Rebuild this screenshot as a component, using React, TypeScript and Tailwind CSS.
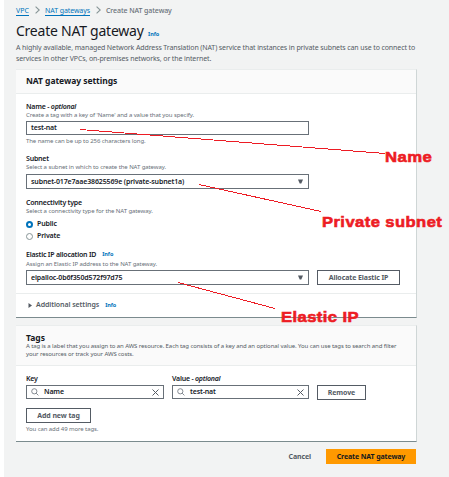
import React from "react";

function Search() {
  return (
    <svg className="mr-[5px] h-2 w-2 shrink-0" viewBox="0 0 8 8" fill="none" stroke="#687078" strokeWidth="0.8">
      <circle cx="3.3" cy="3.3" r="2.6" />
      <path d="M5.2 5.2L7.4 7.4" />
    </svg>
  );
}

function Close() {
  return (
    <svg className="ml-auto h-[7px] w-[7px] shrink-0" viewBox="0 0 7 7" stroke="#545b64" strokeWidth="1">
      <path d="M0.5 0.5L6.5 6.5M6.5 0.5L0.5 6.5" />
    </svg>
  );
}

function Caret() {
  return (
    <svg className="ml-auto h-[5px] w-[5px] shrink-0" viewBox="0 0 5 5" fill="#545b64">
      <path d="M0 0.5H5L3.3 4.5H1.7Z" />
    </svg>
  );
}

function Chevron() {
  return (
    <svg className="h-[8px] w-[5px]" viewBox="0 0 5 8" fill="none" stroke="#879596" strokeWidth="1.1">
      <path d="M0.6 0.6L4.2 4L0.6 7.4" />
    </svg>
  );
}

function Label({ children }: { children: React.ReactNode }) {
  return <div className="h-[10px] text-[7px] leading-[11px] font-semibold tracking-[-0.22px] text-[#16191f]">{children}</div>;
}

function Hint({ children }: { children: React.ReactNode }) {
  return <div className="h-[9px] text-[6px] leading-[9px] tracking-[-0.085px] text-[#687078]">{children}</div>;
}

const box = "flex items-center border border-[#687078] bg-white text-[7px] font-semibold tracking-[-0.14px] text-[#16191f]";
const button = "flex items-center justify-center border border-[#545b64] bg-white pt-px text-[7px] font-bold text-[#545b64]";
const card = "w-[401px] border-t border-r border-b border-t-[#eaeded] border-r-[#cfd6d6] border-b-[#7b8b8e] bg-white";
const note = "absolute origin-left text-[15.5px] leading-[16px] font-bold tracking-[0.4px] text-[#ed1c24] [-webkit-text-stroke:0.6px_#ed1c24]";

export default function App() {
  return (
    <div className="relative h-[477px] w-[449px] overflow-hidden bg-white pl-1 font-['Noto_Sans','Open_Sans',sans-serif] whitespace-nowrap">
      <main className="h-full bg-[#f2f3f3] pl-3">
        <nav className="flex h-4 items-end text-[7px] leading-[12px] text-[#0073bb]">
          <a className="h-[11px] w-[13px] border-b border-[#0073bb]">VPC</a>
          <span className="flex h-[10px] w-4 justify-center"><Chevron /></span>
          <a className="h-[11px] w-[45px] border-b border-[#0073bb] tracking-[-0.08px]">NAT gateways</a>
          <span className="flex h-[10px] w-4 justify-center"><Chevron /></span>
          <span className="h-[11px] font-medium tracking-[-0.09px] text-[#687078]">Create NAT gateway</span>
        </nav>
        <div className="flex h-[26px] items-center pt-1">
          <h1 className="w-[132px] text-[14px] leading-5 tracking-[-0.24px] text-[#16191f]">Create NAT gateway</h1>
          <a className="pt-[5px] text-[5.5px] leading-2 font-bold text-[#0073bb]">Info</a>
        </div>
        <p className="h-[27px] text-[7px] leading-[11px] tracking-[-0.114px] text-[#545b64]">
          A highly available, managed Network Address Translation (NAT) service that instances in private subnets can use to connect to<br />
          services in other VPCs, on-premises networks, or the internet.
        </p>

        <section className={`${card} h-[249px]`}>
          <h2 className="h-6 border-b border-[#eaeded] bg-[#fafafa] pl-[10px] text-[8.5px] leading-[22px] font-bold tracking-[-0.05px] text-[#16191f]">NAT gateway settings</h2>
          <div className="px-[10px] pt-[7px]">
            <Label>Name - <i>optional</i></Label>
            <Hint>Create a tag with a key of 'Name' and a value that you specify.</Hint>
            <div className={`${box} mt-[1px] h-[14px] w-[283px] pl-1`}><span className="pt-px">test-nat</span></div>
            <div className="pt-[2px]"><Hint>The name can be up to 256 characters long.</Hint></div>
            <div className="pt-[7px]"><Label>Subnet</Label></div>
            <Hint>Select a subnet in which to create the NAT gateway.</Hint>
            <div className={`${box} mt-[2px] h-[15px] w-[283px] pr-[5px] pl-1`}><span className="pt-px">subnet-017e7aae38625569e (private-subnet1a)</span><Caret /></div>
            <div className="pt-2"><Label>Connectivity type</Label></div>
            <Hint>Select a connectivity type for the NAT gateway.</Hint>
            <div className="mt-[2px] flex h-3 items-center text-[7px] font-semibold tracking-[-0.14px] text-[#16191f]">
              <span className="mr-1 h-[7px] w-[7px] rounded-full border-2 border-[#0073bb] bg-white" />Public
            </div>
            <div className="flex h-3 items-center text-[7px] font-semibold tracking-[-0.14px] text-[#16191f]">
              <span className="mr-1 h-[7px] w-[7px] rounded-full border border-[#879596] bg-white" />Private
            </div>
            <div className="flex pt-[7px]">
              <Label>Elastic IP allocation ID</Label>
              <a className="ml-[6px] text-[5.5px] leading-[11px] font-bold text-[#0073bb]">Info</a>
            </div>
            <Hint>Assign an Elastic IP address to the NAT gateway.</Hint>
            <div className="mt-px flex gap-2">
              <div className={`${box} h-[15px] w-[283px] pr-[5px] pl-1`}><span className="pt-px">eipalloc-0b6f350d572f97d75</span><Caret /></div>
              <div className={`${button} h-[15px] w-[83px] tracking-[-0.1px]`}>Allocate Elastic IP</div>
            </div>
          </div>
          <div className="mt-2 flex h-6 items-center border-t border-[#eaeded] pl-3 text-[7px] font-semibold tracking-[-0.07px] text-[#545b64]">
            <svg className="mr-1 h-[5px] w-1" viewBox="0 0 4 5" fill="#545b64"><path d="M0.5 0L4 2.5L0.5 5Z" /></svg>
            Additional settings
            <a className="ml-[6px] text-[5.5px] font-bold text-[#0073bb]">Info</a>
          </div>
        </section>

        <section className={`${card} mt-[7px] h-[117px]`}>
          <header className="h-10 border-b border-[#eaeded] bg-[#fafafa] pt-[6px] pl-[10px]">
            <h2 className="h-[10px] text-[8.5px] leading-[11px] font-bold text-[#16191f]">Tags</h2>
            <p className="text-[6px] leading-[8px] tracking-[-0.092px] text-[#545b64]">
              A tag is a label that you assign to an AWS resource. Each tag consists of a key and an optional value. You can use tags to search and filter<br />
              your resources or track your AWS costs.
            </p>
          </header>
          <div className="px-[10px] pt-[7px]">
            <div className="grid grid-cols-[146px_1fr]">
              <Label>Key</Label>
              <Label>Value - <i>optional</i></Label>
            </div>
            <div className="mt-[2px] flex items-start gap-2">
              <div className={`${box} h-[14px] w-[138px] px-[4px]`}><Search /><span className="pt-px">Name</span><Close /></div>
              <div className={`${box} h-[14px] w-[137px] px-[4px]`}><Search /><span className="pt-px">test-nat</span><Close /></div>
              <div className={`${button} h-[15px] w-[49px] tracking-[-0.1px]`}>Remove</div>
            </div>
            <div className={`${button} mt-2 h-[15px] w-[65px] tracking-[-0.1px]`}>Add new tag</div>
            <div className="pt-[2px]"><Hint>You can add 49 more tags.</Hint></div>
          </div>
        </section>

        <footer className="mt-[7px] flex h-[15px] w-[400px] items-center justify-end text-[7px] font-bold tracking-[-0.12px] text-[#545b64]">
          <span className="mr-[15px] pt-px">Cancel</span>
          <span className="flex h-full w-[90px] items-center justify-center bg-[#ff9900] pt-px text-[#16191f]">Create NAT gateway</span>
        </footer>
      </main>

      <svg className="absolute inset-0" width="449" height="477" fill="none" stroke="#ed1c24" strokeWidth="1" shapeRendering="crispEdges">
        <path d="M80 129.5L385 153.5M199 184.5L321 211.5M178 282.5L275 308.5" />
      </svg>
      <div className="font-['Liberation_Sans',Arial,sans-serif]">
        <span className={`${note} top-[149px] left-[385px] scale-x-108`}>Name</span>
        <span className={`${note} top-[214px] left-[322px] scale-x-107`}>Private subnet</span>
        <span className={`${note} top-[309px] left-[281px] scale-x-107`}>Elastic IP</span>
      </div>
    </div>
  );
}
